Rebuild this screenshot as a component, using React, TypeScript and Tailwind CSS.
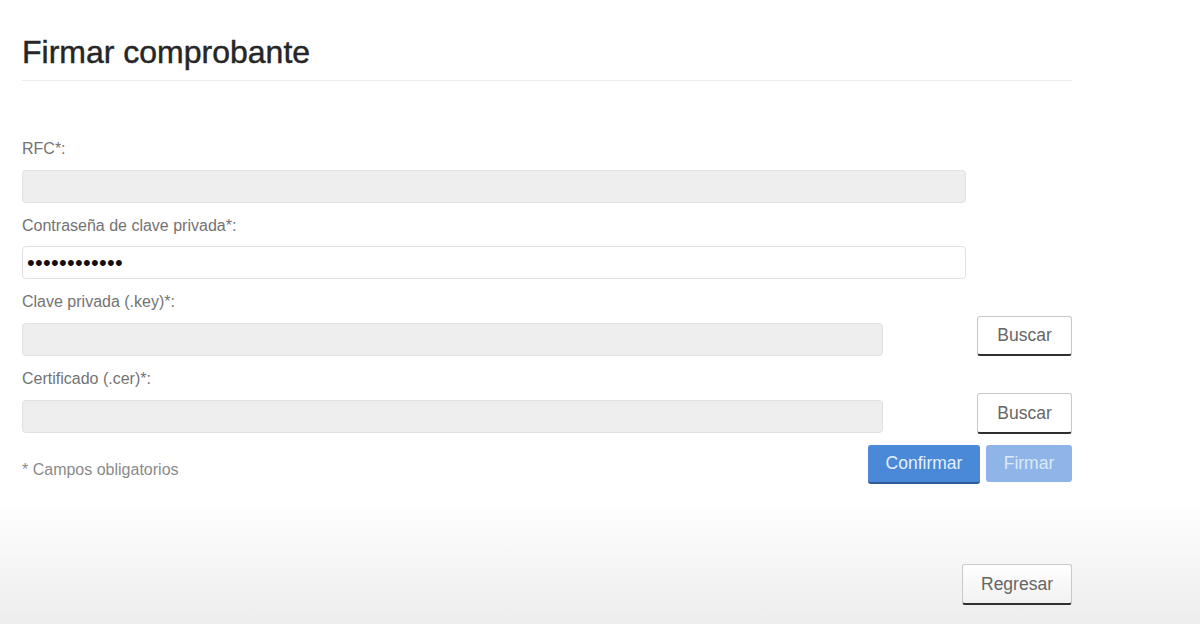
import type { ReactNode } from "react";

const labelCls =
  "block text-[16px] leading-[20px] text-[#737373] font-['Liberation_Sans',Arial,sans-serif]";

function Field({ label, children }: { label: string; children: ReactNode }) {
  return (
    <div className="flex flex-col">
      <label className={labelCls}>{label}</label>
      {children}
    </div>
  );
}

function GrayInput({ className = "" }: { className?: string }) {
  return (
    <div
      className={
        "h-[33px] rounded-[4px] border border-[#e2e1e2] bg-[#efeeef] " +
        className
      }
    />
  );
}

function LightButton({ children, className = "" }: { children: ReactNode; className?: string }) {
  return (
    <button
      className={
        "rounded-[3px] border border-[#c9c9c9] border-b-2 border-b-[#2f2f2f] bg-white text-[17.5px] text-[#666] font-['Liberation_Sans',Arial,sans-serif] " +
        className
      }
    >
      {children}
    </button>
  );
}

export default function App() {
  return (
    <div className="h-[624px] w-[1200px] overflow-hidden bg-gradient-to-b from-white from-[80%] to-[#ededee] font-['Liberation_Sans',Arial,sans-serif]">
      <div className="ml-[22px] w-[1050px]">
        {/* Heading */}
        <div className="border-b border-[#ececec] pt-[34px] pb-[9px]">
          <h1 className="text-[32px] leading-[37px] text-[#262626] [-webkit-text-stroke:0.45px_#262626]">
            Firmar comprobante
          </h1>
        </div>

        <div className="mt-[58px] flex flex-col gap-[13px]">
          <Field label="RFC*:">
            <div className="mt-[11px] w-[944px]">
              <GrayInput />
            </div>
          </Field>

          <Field label="Contraseña de clave privada*:">
            <div className="mt-[10px] flex h-[33px] w-[944px] items-center overflow-hidden rounded-[4px] border border-[#e2e1e2] bg-white pl-[4px] text-[22px] leading-[22px] tracking-[0.3px] text-[#111]">
              ••••••••••••
            </div>
          </Field>

          <Field label="Clave privada (.key)*:">
            <div className="mt-[10px] flex items-center justify-between">
              <GrayInput className="w-[861px]" />
              <LightButton className="-mt-[6px] h-[40px] w-[95px]">Buscar</LightButton>
            </div>
          </Field>

          <Field label="Certificado (.cer)*:">
            <div className="mt-[10px] flex items-center justify-between">
              <GrayInput className="w-[861px]" />
              <LightButton className="-mt-[6px] h-[41px] w-[95px]">Buscar</LightButton>
            </div>
          </Field>
        </div>

        <div className="mt-[11px] flex items-start justify-between">
          <span className="mt-[15px] text-[16px] leading-[20px] text-[#8a8a8a]">
            * Campos obligatorios
          </span>
          <div className="flex gap-[6px]">
            <button className="h-[39px] w-[112px] rounded-[3px] border-b-2 border-b-[#2d5b98] bg-[#4a88d8] text-[17.5px] text-[#e3f0ff]">
              Confirmar
            </button>
            <button className="h-[37px] w-[86px] rounded-[3px] bg-[#8fb5e8] text-[17.5px] text-[#dce9f9]">
              Firmar
            </button>
          </div>
        </div>

        <div className="mt-[80px] flex justify-end">
          <LightButton className="h-[41px] w-[110px] bg-gradient-to-b from-white to-[#f1f1f1]">
            Regresar
          </LightButton>
        </div>
      </div>
    </div>
  );
}
